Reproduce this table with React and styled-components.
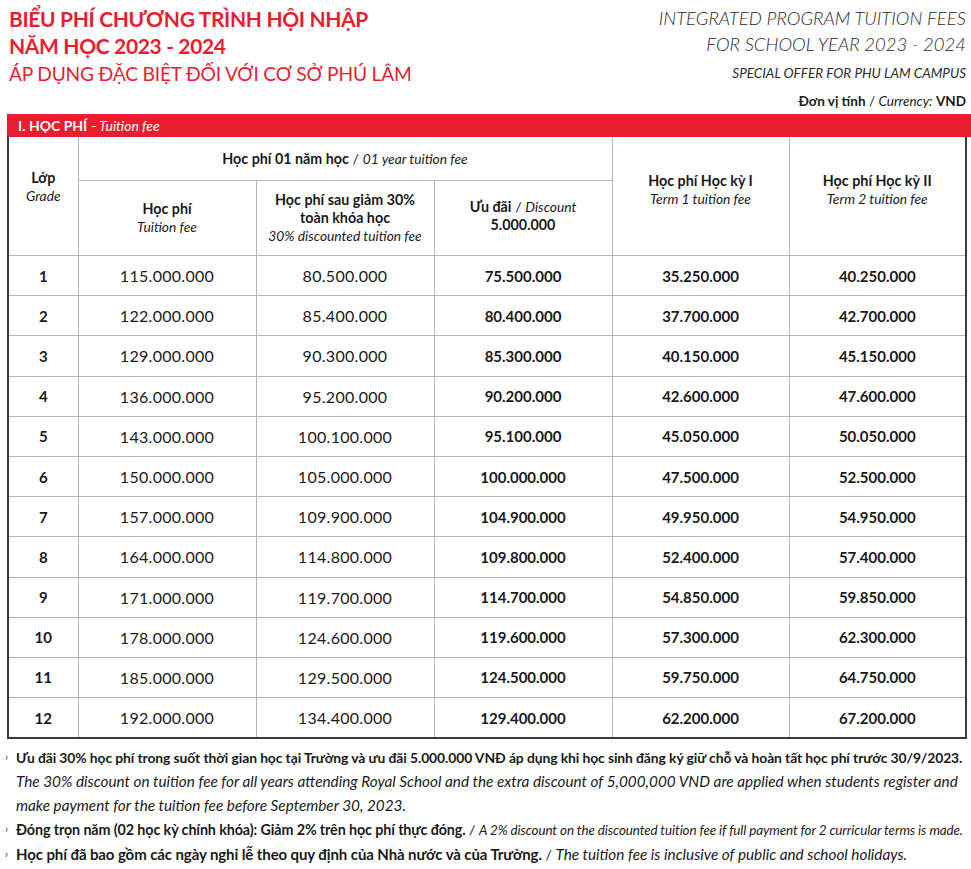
import React from "react";
import styled, { createGlobalStyle } from "styled-components";

const RED = "#e81e2f";
const FONT = `"Lato", "Noto Sans", sans-serif`;

const Global = createGlobalStyle`
  html, body { margin: 0; padding: 0; background: #fff; }
  body { font-family: ${FONT}; color: #1a1a1a; width: 971px; }
`;

const Page = styled.div`
  width: 971px;
  display: flex;
  flex-direction: column;
`;

const Top = styled.header`
  display: flex;
  justify-content: space-between;
  align-items: flex-start;
  padding: 5px 5px 0 9px;
  height: 87px;
`;

const TitleBlock = styled.div`
  display: flex;
  flex-direction: column;
  color: ${RED};
`;

const TitleLine = styled.div`
  font-size: 21px;
  font-weight: 700;
  line-height: 27px;
  letter-spacing: -0.35px;
`;

const SubTitle = styled.div`
  font-size: 19.2px;
  font-weight: 400;
  line-height: 27px;
  margin-top: 1px;
  letter-spacing: -0.2px;
`;

const EnBlock = styled.div`
  display: flex;
  flex-direction: column;
  align-items: flex-end;
  color: #2b2b2b;
  font-style: italic;
`;

const EnLine = styled.div`
  font-size: 18.5px;
  line-height: 26px;
  font-weight: 300;
`;

const EnSmall = styled.div`
  font-size: 13.5px;
  line-height: 18px;
  margin-top: 7px;
  font-weight: 400;
  font-style: italic;
`;

const Currency = styled.div`
  text-align: right;
  padding-right: 5px;
  font-size: 13.5px;
  line-height: 18px;
  height: 22px;
  b { font-weight: 700; }
  i { font-weight: 400; }
`;

const SectionBar = styled.div`
  margin-left: 7px;
  background: ${RED};
  color: #fff;
  height: 23px;
  display: flex;
  align-items: center;
  padding-left: 11px;
  font-size: 14px;
  b { font-weight: 700; }
  i { font-weight: 400; margin-left: 4px; }
`;

const Table = styled.table`
  margin-left: 7px;
  width: 960px;
  border-collapse: collapse;
  table-layout: fixed;
  border-left: 2px solid #3a3a3a;
  border-right: 2px solid #3a3a3a;
  border-bottom: 2px solid #3a3a3a;
`;

const Th = styled.th`
  border: 1px solid #b5b5b5;
  border-top: none;
  font-weight: 400;
  font-size: 14.3px;
  line-height: 18px;
  text-align: center;
  vertical-align: middle;
  padding: ${(p) => p.$pad || "0"};
  height: ${(p) => p.$h || "auto"};
  b { font-weight: 700; }
  i { font-weight: 400; font-size: 13.8px; }
`;

const Td = styled.td`
  border: 1px solid #b5b5b5;
  padding: 0;
  height: 39.2px;
  text-align: center;
  vertical-align: middle;
  font-size: ${(p) => (p.$bold ? "15px" : "16px")};
  font-weight: ${(p) => (p.$bold ? 700 : 400)};
  letter-spacing: ${(p) => (p.$bold ? "0" : "0.3px")};
`;

const Notes = styled.ul`
  list-style: none;
  margin: 6px 0 0 0;
  padding: 0 0 0 5px;
  line-height: 23px;
`;

const Note = styled.li`
  display: flex;
  gap: 5px;
  white-space: ${(p) => (p.$nowrap ? "nowrap" : "normal")};
`;

const NoteVi = styled.b`
  font-weight: 700;
  font-size: ${(p) => p.$size || "14px"};
  letter-spacing: -0.1px;
`;

const NoteEn = styled.i`
  font-weight: 400;
  font-size: ${(p) => p.$size || "15.3px"};
  letter-spacing: ${(p) => p.$ls || "0"};
`;

const Sep = styled.span`
  font-size: 14px;
`;

const Arrow = styled.span`
  font-size: 11px;
  width: 6px;
  flex: none;
  color: #444;
`;

const rows = [
  [1, "115.000.000", "80.500.000", "75.500.000", "35.250.000", "40.250.000"],
  [2, "122.000.000", "85.400.000", "80.400.000", "37.700.000", "42.700.000"],
  [3, "129.000.000", "90.300.000", "85.300.000", "40.150.000", "45.150.000"],
  [4, "136.000.000", "95.200.000", "90.200.000", "42.600.000", "47.600.000"],
  [5, "143.000.000", "100.100.000", "95.100.000", "45.050.000", "50.050.000"],
  [6, "150.000.000", "105.000.000", "100.000.000", "47.500.000", "52.500.000"],
  [7, "157.000.000", "109.900.000", "104.900.000", "49.950.000", "54.950.000"],
  [8, "164.000.000", "114.800.000", "109.800.000", "52.400.000", "57.400.000"],
  [9, "171.000.000", "119.700.000", "114.700.000", "54.850.000", "59.850.000"],
  [10, "178.000.000", "124.600.000", "119.600.000", "57.300.000", "62.300.000"],
  [11, "185.000.000", "129.500.000", "124.500.000", "59.750.000", "64.750.000"],
  [12, "192.000.000", "134.400.000", "129.400.000", "62.200.000", "67.200.000"],
];

export default function App() {
  return (
    <Page>
      <Global />
      <Top>
        <TitleBlock>
          <TitleLine>BIỂU PHÍ CHƯƠNG TRÌNH HỘI NHẬP</TitleLine>
          <TitleLine>NĂM HỌC 2023 - 2024</TitleLine>
          <SubTitle>ÁP DỤNG ĐẶC BIỆT ĐỐI VỚI CƠ SỞ PHÚ LÂM</SubTitle>
        </TitleBlock>
        <EnBlock>
          <EnLine>INTEGRATED PROGRAM TUITION FEES</EnLine>
          <EnLine>FOR SCHOOL YEAR 2023 - 2024</EnLine>
          <EnSmall>SPECIAL OFFER FOR PHU LAM CAMPUS</EnSmall>
        </EnBlock>
      </Top>
      <Currency>
        <b>Đơn vị tính</b> / <i>Currency:</i> <b>VND</b>
      </Currency>
      <SectionBar>
        <b>I. HỌC PHÍ</b>
        <i>- Tuition fee</i>
      </SectionBar>
      <Table>
        <colgroup>
          <col style={{ width: 70 }} />
          <col style={{ width: 178 }} />
          <col style={{ width: 178 }} />
          <col style={{ width: 178 }} />
          <col style={{ width: 177 }} />
          <col style={{ width: 177 }} />
        </colgroup>
        <thead>
          <tr>
            <Th rowSpan={2} $pad="0 0 18px 0">
              <b>Lớp</b>
              <br />
              <i>Grade</i>
            </Th>
            <Th colSpan={3} $h="43px">
              <b>Học phí 01 năm học</b> / <i>01 year tuition fee</i>
            </Th>
            <Th rowSpan={2} $pad="0 0 12px 0">
              <b>Học phí Học kỳ I</b>
              <br />
              <i>Term 1 tuition fee</i>
            </Th>
            <Th rowSpan={2} $pad="0 0 12px 0">
              <b>Học phí Học kỳ II</b>
              <br />
              <i>Term 2 tuition fee</i>
            </Th>
          </tr>
          <tr>
            <Th $h="74px">
              <b>Học phí</b>
              <br />
              <i>Tuition fee</i>
            </Th>
            <Th>
              <b>Học phí sau giảm 30%</b>
              <br />
              <b>toàn khóa học</b>
              <br />
              <i>30% discounted tuition fee</i>
            </Th>
            <Th $pad="0 0 4px 0">
              <b>Ưu đãi</b> / <i>Discount</i>
              <br />
              <b>5.000.000</b>
            </Th>
          </tr>
        </thead>
        <tbody>
          {rows.map((r) => (
            <tr key={r[0]}>
              <Td $bold>{r[0]}</Td>
              <Td>{r[1]}</Td>
              <Td>{r[2]}</Td>
              <Td $bold>{r[3]}</Td>
              <Td $bold>{r[4]}</Td>
              <Td $bold>{r[5]}</Td>
            </tr>
          ))}
        </tbody>
      </Table>
      <Notes>
        <Note>
          <Arrow>›</Arrow>
          <div>
            <NoteVi $size="13.9px">
              Ưu đãi 30% học phí trong suốt thời gian học tại Trường và ưu đãi 5.000.000 VNĐ áp dụng khi học sinh
              đăng ký giữ chỗ và hoàn tất học phí trước 30/9/2023.
            </NoteVi>
            <br />
            <NoteEn>
              The 30% discount on tuition fee for all years attending Royal School and the extra discount of 5,000,000
              VND are applied when students register and make payment for the tuition fee before September 30, 2023.
            </NoteEn>
          </div>
        </Note>
        <Note $nowrap>
          <Arrow>›</Arrow>
          <div>
            <NoteVi $size="14.3px">Đóng trọn năm (02 học kỳ chính khóa): Giảm 2% trên học phí thực đóng.</NoteVi>
            <Sep> / </Sep>
            <NoteEn $size="13.4px" $ls="-0.1px">
              A 2% discount on the discounted tuition fee if full payment for 2 curricular terms is made.
            </NoteEn>
          </div>
        </Note>
        <Note $nowrap>
          <Arrow>›</Arrow>
          <div>
            <NoteVi $size="15px">
              Học phí đã bao gồm các ngày nghỉ lễ theo quy định của Nhà nước và của Trường.
            </NoteVi>
            <Sep> / </Sep>
            <NoteEn>The tuition fee is inclusive of public and school holidays.</NoteEn>
          </div>
        </Note>
      </Notes>
    </Page>
  );
}
